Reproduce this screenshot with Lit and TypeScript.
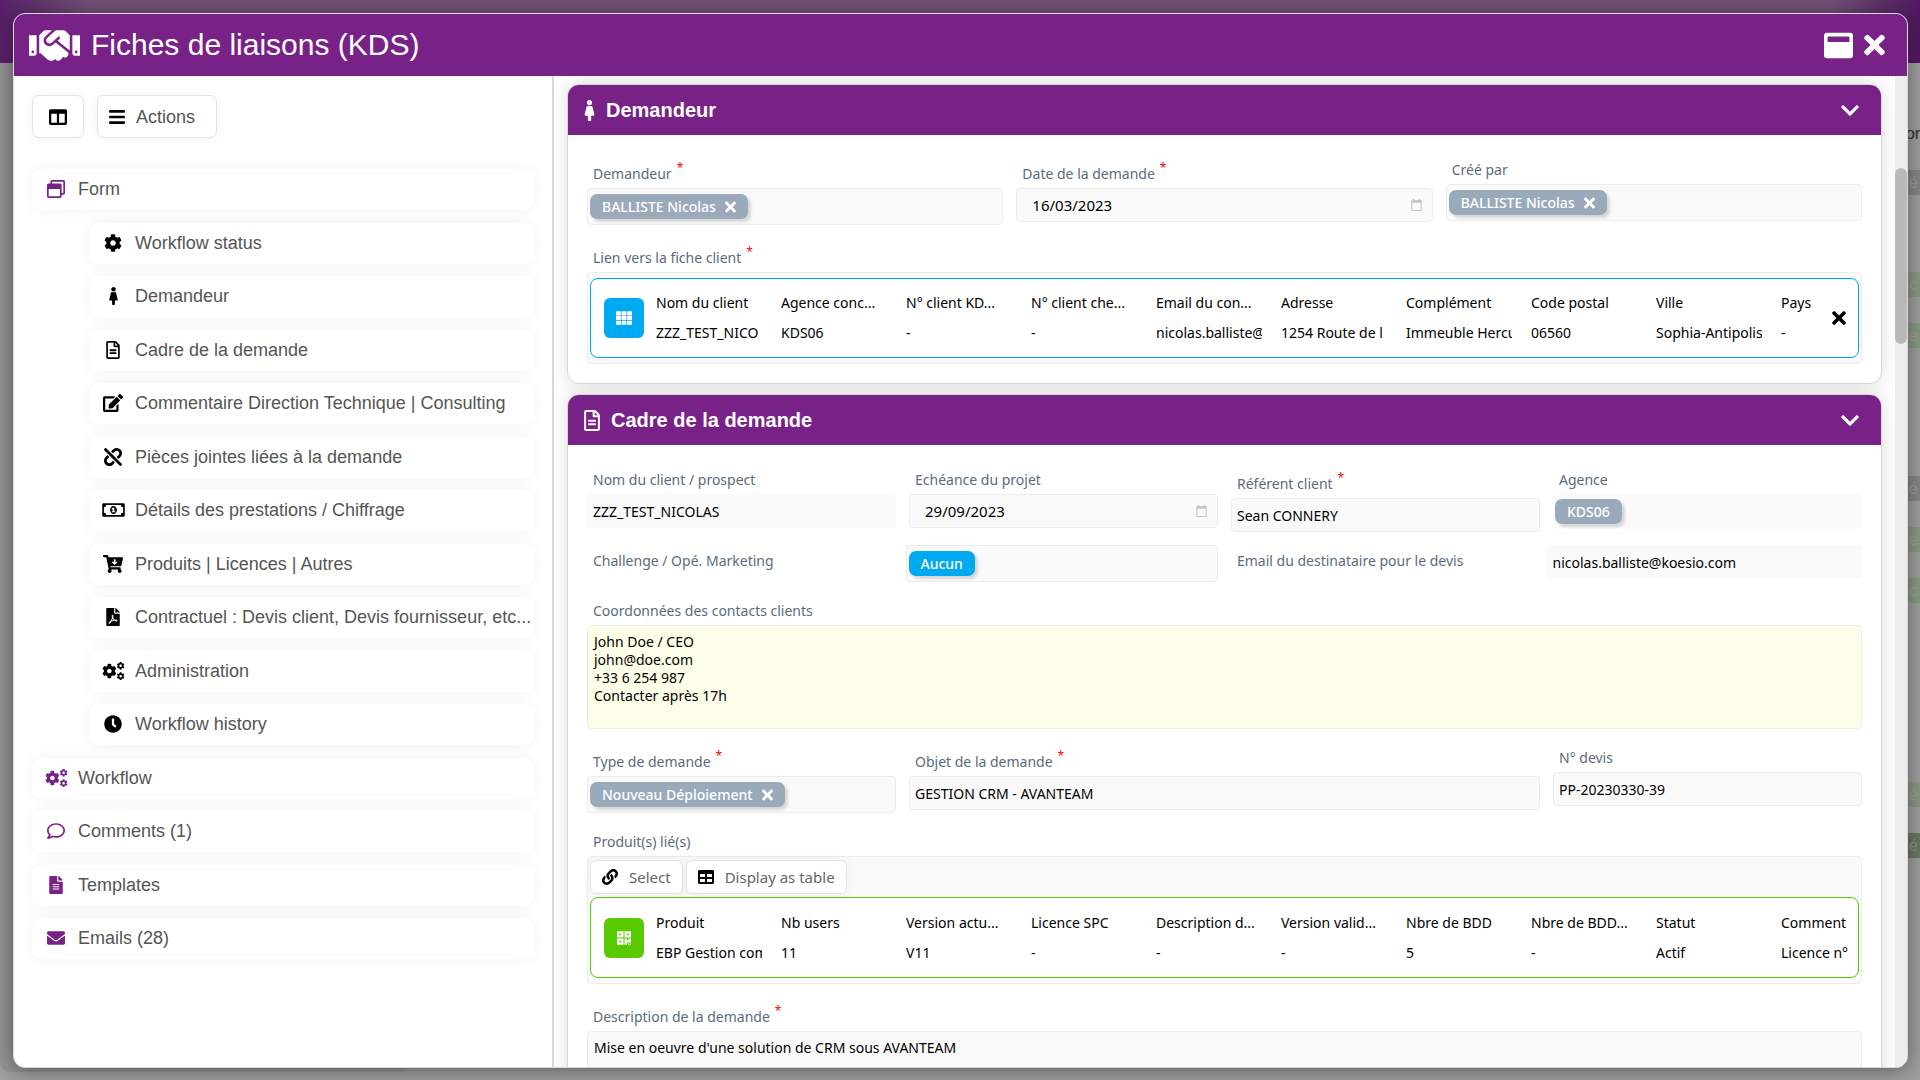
import { LitElement, html, css, svg, nothing, TemplateResult, SVGTemplateResult } from "lit";
import { customElement, property } from "lit/decorators.js";
import { classMap } from "lit/directives/class-map.js";

const COG =
  "M487.4 315.7l-42.6-24.6c4.3-23.2 4.3-47 0-70.2l42.6-24.6c4.9-2.8 7.1-8.6 5.5-14-11.1-35.6-30-67.8-54.7-94.6-3.8-4.1-10-5.1-14.8-2.3L380.8 110c-17.9-15.4-38.5-27.3-60.8-35.1V25.8c0-5.6-3.9-10.5-9.4-11.7-36.7-8.2-74.3-7.8-109.2 0-5.5 1.2-9.4 6.1-9.4 11.7V75c-22.2 7.9-42.8 19.8-60.8 35.1L88.7 85.5c-4.9-2.8-11-1.9-14.8 2.3-24.7 26.7-43.6 58.9-54.7 94.6-1.7 5.4.6 11.2 5.5 14L67.3 221c-4.3 23.2-4.3 47 0 70.2l-42.6 24.6c-4.9 2.8-7.1 8.6-5.5 14 11.1 35.6 30 67.8 54.7 94.6 3.8 4.1 10 5.1 14.8 2.3l42.6-24.6c17.9 15.4 38.5 27.3 60.8 35.1v49.2c0 5.6 3.9 10.5 9.4 11.7 36.7 8.2 74.3 7.8 109.2 0 5.5-1.2 9.4-6.1 9.4-11.7v-49.2c22.2-7.9 42.8-19.8 60.8-35.1l42.6 24.6c4.9 2.8 11 1.9 14.8-2.3 24.7-26.7 43.6-58.9 54.7-94.6 1.5-5.5-.7-11.3-5.6-14.1zM256 336c-44.1 0-80-35.9-80-80s35.9-80 80-80 80 35.9 80 80-35.9 80-80 80z";

const p = (d: string) => svg`<path d=${d}></path>`;

/* name -> [view box width, artwork]; every view box is 512 high */
const ICONS: Record<string, [number, SVGTemplateResult]> = {
  handshake: [640, p("M434.7 64h-85.9c-8 0-15.7 3-21.6 8.4l-98.3 90c-.1.1-.2.3-.3.4-16.6 15.6-16.3 40.5-2.1 56 12.7 13.9 39.4 17.6 56.1 2.7.1-.1.3-.1.4-.2l79.9-73.2c6.5-5.9 16.7-5.5 22.6 1 6 6.5 5.5 16.6-1 22.6l-26.1 23.9L504 313.8c2.9 2.4 5.5 5 7.9 7.7V128l-54.6-54.6c-5.9-6-14.1-9.4-22.6-9.4zM544 128.2v223.9c0 17.7 14.3 32 32 32h64V128.2h-96zm48 223.9c-8.8 0-16-7.2-16-16s7.2-16 16-16 16 7.2 16 16-7.2 16-16 16zM0 384h64c17.7 0 32-14.3 32-32V128.2H0V384zm48-63.9c8.8 0 16 7.2 16 16s-7.2 16-16 16-16-7.2-16-16c0-8.9 7.2-16 16-16zm435.9 18.6L334.6 217.5l-30 27.5c-29.7 27.1-75.2 24.5-101.7-4.4-26.9-29.4-24.8-74.9 4.4-101.7L289.1 64h-83.8c-8.5 0-16.6 3.4-22.6 9.4L128 128v223.9h18.3l90.5 81.9c27.4 22.3 67.7 18.1 90-9.3l.2-.2 17.9 15.5c15.9 13 39.4 10.5 52.3-5.4l31.4-38.6 5.4 4.4c13.7 11.1 33.9 9.1 45-4.7l9.5-11.7c11.2-13.8 9.1-33.9-4.6-45.1z")],
  cog: [512, p(COG)],
  cogs: [640, svg`<path d=${COG} transform="translate(-8 46) scale(.82)"></path><path d=${COG} transform="translate(410 -4) scale(.44)"></path><path d=${COG} transform="translate(410 290) scale(.44)"></path>`],
  female: [256, p("M128 0c35.346 0 64 28.654 64 64s-28.654 64-64 64c-35.346 0-64-28.654-64-64S92.654 0 128 0m119.283 354.179l-48-192A24 24 0 0 0 176 144h-11.36c-22.711 10.443-49.59 10.894-73.28 0H80a24 24 0 0 0-23.283 18.179l-48 192C4.935 369.305 16.383 384 32 384h56v104c0 13.255 10.745 24 24 24h32c13.255 0 24-10.745 24-24V384h56c15.591 0 27.071-14.671 23.283-29.821z")],
  file: [384, p("M288 248v28c0 6.6-5.4 12-12 12H108c-6.6 0-12-5.4-12-12v-28c0-6.6 5.4-12 12-12h168c6.6 0 12 5.4 12 12zm-12 72H108c-6.6 0-12 5.4-12 12v28c0 6.6 5.4 12 12 12h168c6.6 0 12-5.4 12-12v-28c0-6.6-5.4-12-12-12zm108-188.1V464c0 26.5-21.5 48-48 48H48c-26.5 0-48-21.5-48-48V48C0 21.5 21.5 0 48 0h204.1C264.8 0 277 5.1 286 14.1L369.9 98c9 8.9 14.1 21.2 14.1 33.9zm-128-80V128h76.1L256 51.9zM336 464V176H232c-13.3 0-24-10.7-24-24V48H48v416h288z")],
  fileSolid: [384, p("M224 136V0H24C10.7 0 0 10.7 0 24v464c0 13.3 10.7 24 24 24h336c13.3 0 24-10.7 24-24V160H248c-13.2 0-24-10.8-24-24zm64 236c0 6.6-5.4 12-12 12H108c-6.6 0-12-5.4-12-12v-8c0-6.6 5.4-12 12-12h168c6.6 0 12 5.4 12 12v8zm0-64c0 6.6-5.4 12-12 12H108c-6.6 0-12-5.4-12-12v-8c0-6.6 5.4-12 12-12h168c6.6 0 12 5.4 12 12v8zm0-72v8c0 6.6-5.4 12-12 12H108c-6.6 0-12-5.4-12-12v-8c0-6.6 5.4-12 12-12h168c6.6 0 12 5.4 12 12zm96-114.1v6.1H256V0h6.1c6.4 0 12.5 2.5 17 7l97.9 98c4.5 4.5 7 10.6 7 16.9z")],
  edit: [576, p("M402.6 83.2l90.2 90.2c3.8 3.8 3.8 10 0 13.8L274.4 405.6l-92.8 10.3c-12.4 1.4-22.9-9.1-21.5-21.5l10.3-92.8L388.8 83.2c3.8-3.8 10-3.8 13.8 0zm162-22.9l-48.8-48.8c-15.2-15.2-39.9-15.2-55.2 0l-35.4 35.4c-3.8 3.8-3.8 10 0 13.8l90.2 90.2c3.8 3.8 10 3.8 13.8 0l35.4-35.4c15.2-15.3 15.2-40 0-55.2zM384 346.2V448H64V128h229.8c3.2 0 6.2-1.3 8.5-3.5l40-40c7.6-7.6 2.2-20.5-8.5-20.5H48C21.5 64 0 85.5 0 112v352c0 26.5 21.5 48 48 48h352c26.5 0 48-21.5 48-48V306.2c0-10.7-12.9-16-20.5-8.5l-40 40c-2.2 2.3-3.5 5.3-3.5 8.5z")],
  unlink: [512, p("M304.083 405.907c4.686 4.686 4.686 12.284 0 16.971l-44.674 44.674c-59.263 59.262-155.693 59.266-214.961 0-59.264-59.265-59.264-155.696 0-214.96l44.675-44.675c4.686-4.686 12.284-4.686 16.971 0l39.598 39.598c4.686 4.686 4.686 12.284 0 16.971l-44.675 44.674c-28.072 28.073-28.072 73.75 0 101.823 28.072 28.072 73.75 28.073 101.824 0l44.674-44.674c4.686-4.686 12.284-4.686 16.971 0l39.597 39.598zm-56.568-260.216c4.686 4.686 12.284 4.686 16.971 0l44.674-44.674c28.072-28.075 73.75-28.073 101.824 0 28.072 28.073 28.072 73.75 0 101.823l-44.675 44.674c-4.686 4.686-4.686 12.284 0 16.971l39.598 39.598c4.686 4.686 12.284 4.686 16.971 0l44.675-44.675c59.265-59.265 59.265-155.695 0-214.96-59.266-59.264-155.695-59.264-214.961 0l-44.674 44.674c-4.686 4.686-4.686 12.284 0 16.971l39.597 39.598zm234.828 359.28l22.627-22.627c9.373-9.373 9.373-24.569 0-33.941L63.598 7.029c-9.373-9.373-24.569-9.373-33.941 0L7.029 29.657c-9.373 9.373-9.373 24.569 0 33.941l441.373 441.373c9.373 9.372 24.569 9.372 33.941 0z")],
  money: [640, svg`<path fill-rule="evenodd" d="M32 64H608a32 32 0 0 1 32 32V416a32 32 0 0 1-32 32H32a32 32 0 0 1-32-32V96A32 32 0 0 1 32 64ZM112 112A64 64 0 0 1 48 176V336A64 64 0 0 1 112 400H528A64 64 0 0 1 592 336V176A64 64 0 0 1 528 112Z"></path><path fill-rule="evenodd" d="M320 144c53 0 96 50 96 112s-43 112-96 112-96-50-96-112 43-112 96-112Zm-24 48-26 18v30l26-8v56h-22v32h92v-32h-22v-96Z"></path>`],
  cart: [576, p("M504.717 320H211.572l6.545 32h268.418c15.401 0 26.816 14.301 23.403 29.319l-5.517 24.276C523.112 414.668 536 433.828 536 456c0 31.202-25.519 56.444-56.824 55.994-29.823-.429-54.35-24.631-55.155-54.447-.44-16.287 6.085-31.049 16.803-41.548H231.176C241.553 426.165 248 440.326 248 456c0 31.813-26.528 57.431-58.67 55.938-28.54-1.325-51.751-24.385-53.251-52.917-1.158-22.034 10.436-41.455 28.051-51.586L93.883 64H24C10.745 64 0 53.255 0 40V24C0 10.745 10.745 0 24 0h102.529c11.401 0 21.228 8.021 23.513 19.19L159.208 64H551.99c15.401 0 26.816 14.301 23.403 29.319l-47.273 208C525.637 312.246 515.923 320 504.717 320zM403.029 192H360v-60c0-6.627-5.373-12-12-12h-24c-6.627 0-12 5.373-12 12v60h-43.029c-10.691 0-16.045 12.926-8.485 20.485l67.029 67.029c4.686 4.686 12.284 4.686 16.971 0l67.029-67.029c7.559-7.559 2.205-20.485-8.486-20.485z")],
  pdf: [384, p("M181.9 256.1c-5-16-4.9-46.9-2-46.9 8.4 0 7.6 36.9 2 46.9zm-1.7 47.2c-7.7 20.2-17.3 43.3-28.4 62.7 18.3-7 39-17.2 62.9-21.9-12.7-9.6-24.9-23.4-34.5-40.8zM86.1 428.1c0 .8 13.2-5.4 34.9-40.2-6.7 6.3-29.1 24.5-34.9 40.2zM248 160h136v328c0 13.3-10.7 24-24 24H24c-13.3 0-24-10.7-24-24V24C0 10.7 10.7 0 24 0h200v136c0 13.2 10.8 24 24 24zm-8 171.8c-20-12.2-33.3-29-42.7-53.8 4.5-18.5 11.6-46.6 6.2-64.2-4.7-29.4-42.4-26.5-47.8-6.8-5 18.3-.4 44.1 8.1 77-11.6 27.6-28.7 64.6-40.8 85.8-.1 0-.1.1-.2.1-27.1 13.9-73.6 44.5-54.5 68 5.6 6.9 16 10 21.5 10 17.9 0 35.7-18 61.1-61.8 25.8-8.5 54.1-19.1 79-23.2 21.7 11.8 47.1 19.5 64 19.5 29.2 0 31.2-32 19.7-43.4-13.9-13.6-54.3-9.7-73.6-7.2zM377 105L279 7c-4.5-4.5-10.6-7-17-7h-6v128h128v-6.1c0-6.3-2.5-12.4-7-16.9zm-74.1 255.3c4.1-2.7-2.5-11.9-42.8-9 37.1 15.8 42.8 9 42.8 9z")],
  clock: [512, p("M256,8C119,8,8,119,8,256S119,504,256,504,504,393,504,256,393,8,256,8Zm92.49,313h0l-20,25a16,16,0,0,1-22.49,2.5h0l-67-49.72a40,40,0,0,1-15-31.23V112a16,16,0,0,1,16-16h32a16,16,0,0,1,16,16V256l58,42.5A16,16,0,0,1,348.49,321Z")],
  comment: [512, p("M256 32C114.6 32 0 125.1 0 240c0 47.6 19.9 91.2 52.9 126.3C38 405.7 7 439.1 6.5 439.5c-6.6 7-8.4 17.2-4.6 26S14.4 480 24 480c61.5 0 110-25.7 139.1-46.3C192 442.8 223.2 448 256 448c141.4 0 256-93.1 256-208S397.4 32 256 32zm0 368c-26.7 0-53.1-4.1-78.4-12.1l-22.7-7.2-19.5 13.8c-14.3 10.1-33.9 21.4-57.5 29 7.3-12.1 14.4-25.7 19.9-40.2l10.6-28.1-20.6-21.8C69.7 314.1 48 282.2 48 240c0-88.2 93.3-160 208-160s208 71.8 208 160-93.3 160-208 160z")],
  envelope: [512, p("M502.3 190.8c3.9-3.1 9.7-.2 9.7 4.7V400c0 26.5-21.5 48-48 48H48c-26.5 0-48-21.5-48-48V195.6c0-5 5.7-7.8 9.7-4.7 22.4 17.4 52.1 39.5 154.1 113.6 21.1 15.4 56.7 47.8 92.2 47.6 35.7.3 72-32.8 92.3-47.6 102-74.1 131.6-96.3 154-113.7zM256 320c23.2.4 56.6-29.2 73.4-41.4 132.7-96.3 142.8-104.7 173.4-128.7 5.8-4.5 9.2-11.5 9.2-18.9v-19c0-26.5-21.5-48-48-48H48c-26.5 0-48 21.5-48 48v19c0 7.4 3.4 14.3 9.2 18.9 30.6 23.9 40.7 32.4 173.4 128.7 16.8 12.2 50.2 41.8 73.4 41.4z")],
  windows: [512, p("M464 0H144c-26.5 0-48 21.5-48 48v48H48c-26.5 0-48 21.5-48 48v320c0 26.5 21.5 48 48 48h320c26.5 0 48-21.5 48-48v-48h48c26.5 0 48-21.5 48-48V48c0-26.5-21.5-48-48-48zm-96 464H48V256h320v208zm96-96h-48V144c0-26.5-21.5-48-48-48H144V48h320v320z")],
  maximize: [512, p("M464 32H48C21.5 32 0 53.5 0 80v352c0 26.5 21.5 48 48 48h416c26.5 0 48-21.5 48-48V80c0-26.5-21.5-48-48-48zm-16 160H64v-84c0-6.6 5.4-12 12-12h360c6.6 0 12 5.4 12 12v84z")],
  times: [352, p("M242.72 256l100.07-100.07c12.28-12.28 12.28-32.19 0-44.48l-22.24-22.24c-12.28-12.28-32.19-12.28-44.48 0L176 189.28 75.93 89.21c-12.28-12.28-32.19-12.28-44.48 0L9.21 111.45c-12.28 12.28-12.28 32.19 0 44.48L109.28 256 9.21 356.07c-12.28 12.28-12.28 32.19 0 44.48l22.24 22.24c12.28 12.28 32.2 12.28 44.48 0L176 322.72l100.07 100.07c12.28 12.28 32.2 12.28 44.48 0l22.24-22.24c12.28-12.28 12.28-32.19 0-44.48L242.72 256z")],
  bars: [448, p("M16 132h416c8.837 0 16-7.163 16-16V76c0-8.837-7.163-16-16-16H16C7.163 60 0 67.163 0 76v40c0 8.837 7.163 16 16 16zm0 160h416c8.837 0 16-7.163 16-16v-40c0-8.837-7.163-16-16-16H16c-8.837 0-16 7.163-16 16v40c0 8.837 7.163 16 16 16zm0 160h416c8.837 0 16-7.163 16-16v-40c0-8.837-7.163-16-16-16H16c-8.837 0-16 7.163-16 16v40c0 8.837 7.163 16 16 16z")],
  columns: [512, p("M464 32H48C21.49 32 0 53.49 0 80v352c0 26.51 21.49 48 48 48h416c26.51 0 48-21.49 48-48V80c0-26.51-21.49-48-48-48zM224 416H64V160h160v256zm224 0H288V160h160v256z")],
  chevron: [448, p("M207.029 381.476L12.686 187.132c-9.373-9.373-9.373-24.569 0-33.941l22.667-22.667c9.357-9.357 24.522-9.375 33.901-.04L224 284.505l154.745-154.021c9.379-9.335 24.544-9.317 33.901.04l22.667 22.667c9.373 9.373 9.373 24.569 0 33.941L240.971 381.476c-9.373 9.372-24.569 9.372-33.942 0z")],
  link: [512, p("M326.612 185.391c59.747 59.809 58.927 155.698.36 214.59-.11.12-.24.25-.36.37l-67.2 67.2c-59.27 59.27-155.699 59.262-214.96 0-59.27-59.26-59.27-155.7 0-214.96l37.106-37.106c9.84-9.84 26.786-3.3 27.294 10.606.648 17.722 3.826 35.527 9.69 52.721 1.986 5.822.567 12.262-3.783 16.612l-13.087 13.087c-28.026 28.026-28.905 73.66-1.155 101.96 28.024 28.579 74.086 28.749 102.325.51l67.2-67.19c28.191-28.191 28.073-73.757 0-101.83-3.701-3.694-7.429-6.564-10.341-8.569a16.037 16.037 0 0 1-6.947-12.606c-.396-10.567 3.348-21.456 11.698-29.806l21.054-21.055c5.521-5.521 14.182-6.199 20.584-1.731a152.482 152.482 0 0 1 20.522 17.197zM467.547 44.449c-59.261-59.262-155.69-59.27-214.96 0l-67.2 67.2c-.12.12-.25.25-.36.37-58.566 58.892-59.387 154.781.36 214.59a152.454 152.454 0 0 0 20.521 17.196c6.402 4.468 15.064 3.789 20.584-1.731l21.054-21.055c8.35-8.35 12.094-19.239 11.698-29.806a16.037 16.037 0 0 0-6.947-12.606c-2.912-2.005-6.64-4.875-10.341-8.569-28.073-28.073-28.191-73.639 0-101.83l67.2-67.19c28.239-28.239 74.3-28.069 102.325.51 27.75 28.3 26.872 73.934-1.155 101.96l-13.087 13.087c-4.35 4.35-5.769 10.79-3.783 16.612 5.864 17.194 9.042 34.999 9.69 52.721.509 13.906 17.454 20.446 27.294 10.606l37.106-37.106c59.271-59.259 59.271-155.699.001-214.959z")],
  table: [512, p("M464 32H48C21.49 32 0 53.49 0 80v352c0 26.51 21.49 48 48 48h416c26.51 0 48-21.49 48-48V80c0-26.51-21.49-48-48-48zM224 416H64v-96h160v96zm0-160H64v-96h160v96zm224 160H288v-96h160v96zm0-160H288v-96h160v96z")],
  grid: [512, p("M0 40h156v132H0zM178 40h156v132H178zM356 40h156v132H356zM0 190h156v132H0zM178 190h156v132H178zM356 190h156v132H356zM0 340h156v132H0zM178 340h156v132H178zM356 340h156v132H356z")],
  qrcode: [512, svg`<path fill-rule="evenodd" d="M32 40H240V240H32ZM106 112V168H166V112ZM272 40H480V240H272ZM346 112V168H406V112ZM32 272H240V472H32ZM106 344V400H166V344ZM272 272H346V326H400V272H480V400H346V472H272ZM380 430H420V472H380ZM440 430H480V472H440Z"></path>`],
  calendar: [448, svg`<path fill-rule="evenodd" d="M64 0H128V40H320V0H384V40H408A40 40 0 0 1 448 80V472A40 40 0 0 1 408 512H40A40 40 0 0 1 0 472V80A40 40 0 0 1 40 40H64ZM48 160V464H400V160Z"></path>`],
};

@customElement("ui-icon")
export class UiIcon extends LitElement {
  @property() name = "";
  @property({ type: Number }) size = 18;

  static styles = css`
    :host { display: inline-flex; flex: none; }
    svg { display: block; fill: currentColor; }
  `;

  render() {
    const [width, art] = ICONS[this.name];
    return html`<svg
      aria-hidden="true"
      width=${Math.round((width * this.size) / 512)}
      height=${this.size}
      viewBox="0 0 ${width} 512"
    >${art}</svg>`;
  }
}

const icon = (name: string, size: number) => html`<ui-icon name=${name} .size=${size}></ui-icon>`;

const SECTIONS: [string, string][] = [
  ["cog", "Workflow status"],
  ["female", "Demandeur"],
  ["file", "Cadre de la demande"],
  ["edit", "Commentaire Direction Technique | Consulting"],
  ["unlink", "Pièces jointes liées à la demande"],
  ["money", "Détails des prestations / Chiffrage"],
  ["cart", "Produits | Licences | Autres"],
  ["pdf", "Contractuel : Devis client, Devis fournisseur, etc..."],
  ["cogs", "Administration"],
  ["clock", "Workflow history"],
];

const PANELS: [string, string][] = [
  ["cogs", "Workflow"],
  ["comment", "Comments (1)"],
  ["fileSolid", "Templates"],
  ["envelope", "Emails (28)"],
];

const CLIENT: [string, string][] = [
  ["Nom du client", "ZZZ_TEST_NICO"],
  ["Agence conc...", "KDS06"],
  ["N° client KD...", "-"],
  ["N° client che...", "-"],
  ["Email du con...", "nicolas.balliste@"],
  ["Adresse", "1254 Route de l"],
  ["Complément", "Immeuble Hercu"],
  ["Code postal", "06560"],
  ["Ville", "Sophia-Antipolis"],
  ["Pays", "-"],
];

const PRODUCT: [string, string][] = [
  ["Produit", "EBP Gestion com"],
  ["Nb users", "11"],
  ["Version actu...", "V11"],
  ["Licence SPC", "-"],
  ["Description d...", "-"],
  ["Version valid...", "-"],
  ["Nbre de BDD", "5"],
  ["Nbre de BDD...", "-"],
  ["Statut", "Actif"],
  ["Comment", "Licence n°"],
];

/* status tags of the list under the dialog, one every row */
const TAGS: [string, string][] = [
  ["grey", "lé"], ["", ""], ["green", "nc"], ["green", "de"], ["", ""], ["", ""], ["grey", "lé"],
  ["green", "de"], ["green", "nc"], ["", ""], ["", ""], ["", ""], ["green", "é"], ["dark", "é"],
];

@customElement("app-root")
export class AppRoot extends LitElement {
  static styles = css`
    :host {
      display: block;
      position: relative;
      height: 100vh;
      overflow: hidden;
      box-sizing: border-box;
      padding: 13px 12px 12px 13px;
      background: #a0a0a0;
      color: #000;
      font: 14px/20px "Noto Sans", "Open Sans", sans-serif;
      --brand: #782287;
      --ui: "Liberation Sans", Arial, sans-serif;
    }
    *, *::before, *::after { box-sizing: border-box; }
    button, input, textarea { font: inherit; color: inherit; margin: 0; }
    button { display: inline-flex; align-items: center; border: 0; padding: 0; background: none; cursor: pointer; }
    ul { list-style: none; margin: 0; padding: 0; }
    h1, h2 { margin: 0; }

    .backdrop { position: absolute; inset: 0; display: flex; flex-direction: column; }
    .topbar { flex: none; height: 63px; background: linear-gradient(90deg, #5a1f6b, #755479 90px, #755479 calc(100% - 90px), #521763); }
    .under { flex: 1; display: flex; justify-content: space-between; }
    .under-panel { width: 410px; margin-bottom: 8px; border-radius: 0 0 10px 10px; background: #959595; }
    .under-rows { width: 12px; padding-top: 58px; display: flex; flex-direction: column; gap: 24px; font: 17px/25px var(--ui); overflow: hidden; }
    .under-head { color: #333; height: 25px; display: flex; justify-content: flex-end; margin-right: -9px; }
    .tags { display: flex; flex-direction: column; gap: 26px; }
    .tag { height: 25px; display: flex; justify-content: flex-end; padding-right: 2px; color: #a0a0a0; }
    .tag.grey { background: #888; }
    .tag.green { background: #8c9b86; }
    .tag.dark { background: #6d7866; color: #8d9686; }

    .modal {
      position: relative;
      height: 100%;
      display: flex;
      flex-direction: column;
      overflow: hidden;
      border: 1px solid #d8d8d8;
      border-radius: 12px;
      background: #fff;
      box-shadow: 0 2px 22px rgba(0, 0, 0, 0.45);
    }
    .titlebar { flex: none; height: 62px; display: flex; align-items: center; gap: 11px; padding: 0 22px 0 15px; background: var(--brand); color: #fff; }
    .titlebar h1 { flex: 1; font: 400 30px/36px var(--ui); }
    .window-buttons { display: flex; gap: 11px; }
    .content { flex: 1; min-height: 0; display: flex; }

    .sidebar { flex: 0 0 540px; min-width: 0; padding: 19px 18px; border-right: 2px solid #d8d8d8; color: #555; font: 18px/24px var(--ui); }
    .toolbar { display: flex; gap: 13px; margin-bottom: 31px; }
    .tool { height: 43px; padding: 0 21px 0 11px; gap: 11px; border: 1px solid #e4e4e4; border-radius: 7px; background: #fff; box-shadow: 0 0 12px rgba(0, 0, 0, 0.05); }
    .tool.square { width: 52px; padding: 0; justify-content: center; }
    .tool ui-icon { color: #000; }
    .nav { display: flex; flex-direction: column; gap: 13px; }
    .sub { margin: 13px 0 0 57px; }
    .sub, .more { display: flex; flex-direction: column; gap: 12px; }
    .sub > li:nth-child(even):not(:last-child), .more > li:nth-child(even) { padding-bottom: 1px; }
    .entry { width: 100%; height: 41px; display: flex; align-items: center; gap: 10px; padding: 0 2px 2px 12px; border-radius: 10px; background: #fff; box-shadow: 0 0 16px rgba(0, 0, 0, 0.05); color: #555; text-decoration: none; white-space: nowrap; }
    .entry-icon { flex: none; width: 24px; display: flex; justify-content: center; color: #000; }
    .entry-icon.brand { color: var(--brand); }

    .main { flex: 1; min-width: 0; padding: 8px 13px 0; display: flex; flex-direction: column; gap: 10px; overflow: hidden; }
    .scroll { flex: none; width: 12px; padding-top: 92px; background: #ededed; }
    .thumb { height: 176px; border-radius: 6px; background: #b9b9b9; }

    .card { flex: none; border: 1px solid #d8d8d8; border-radius: 12px; background: #fff; box-shadow: 0 0 18px rgba(0, 0, 0, 0.14); }
    .card-head { height: 50px; display: flex; align-items: center; gap: 11px; padding: 0 22px 0 16px; border-radius: 11px 11px 0 0; background: var(--brand); color: #fff; }
    .card-head h2 { flex: 1; font: 700 20px/24px var(--ui); }
    .card-body { padding: 25px 19px 19px; display: flex; flex-direction: column; gap: 19px; }
    .group { display: flex; flex-direction: column; gap: 13px; }
    .row { display: grid; gap: 13px; align-items: start; }
    .three { grid-template-columns: repeat(3, 1fr); }
    .four { grid-template-columns: repeat(4, 1fr); }
    .two { grid-template-columns: repeat(2, 1fr); }
    .span2 { grid-column: span 2; }

    .cell { min-width: 0; }
    .label { display: flex; gap: 5px; align-items: flex-end; padding: 0 6px 4px; color: #5b6b7d; line-height: 20px; }
    .label.required { padding-top: 4px; }
    .label .star { align-self: flex-start; margin-top: -4px; color: #f00; font-size: 12px; line-height: 16px; }
    .inline { display: flex; align-items: flex-start; }
    .inline > .label { flex: 1; padding: 0 6px; line-height: 32px; }
    .inline > .box, .inline > .text { flex: 1; min-width: 0; }

    .text, .area, .box { width: 100%; display: block; border: 1px solid #ececec; border-radius: 4px; background: #fafafa; }
    .text { height: 34px; padding: 0 5px; }
    .text.plain { border-color: #fafafa; }
    .area { resize: none; padding: 7px 6px 5px; line-height: 18px; overflow: hidden; }
    .area.cream { background: #feffe8; }
    .date { display: flex; align-items: center; padding: 0 11px 0 15px; height: 34px; }
    .date input { flex: 1; min-width: 0; border: 0; padding: 0; background: none; font-size: 15px; }
    .date button { width: 10px; color: #c6c6c6; }
    .box.chips { display: flex; padding: 5px 2px; }
    .box.chips.plain { border: 0; }
    .box.stack { padding: 5px 2px; }
    .box.tools { padding-top: 3px; }

    .chip { height: 25px; display: inline-flex; align-items: center; gap: 9px; padding: 0 12px; border-radius: 7px; background: #9aaabb; color: #fff; font-weight: 500; box-shadow: 3px 3px 3px rgba(0, 0, 0, 0.14); white-space: nowrap; }
    .chip.blue { background: #00aaf0; }

    .record-tools { display: flex; gap: 3px; margin-bottom: 3px; }
    .record-tools button { height: 34px; gap: 11px; padding: 0 11px; border: 1px solid #e4e4e4; border-radius: 6px; background: #fff; color: #666; font-size: 15px; box-shadow: 0 0 12px rgba(0, 0, 0, 0.05); }
    .record-tools ui-icon { color: #000; }
    .record { display: flex; align-items: center; gap: 12px; min-height: 80px; padding: 9px 12px 9px 13px; border: 1px solid #00a4ea; border-radius: 8px; background: #fff; }
    .record.green { min-height: 81px; padding-right: 10px; border-color: #57cb00; }
    .tile { flex: none; width: 40px; height: 40px; display: flex; align-items: center; justify-content: center; border-radius: 6px; background: #00aaf0; color: #fff; }
    .green .tile { background: #57cb00; }
    .record-data { flex: 1; min-width: 0; overflow: hidden; }
    .record table { width: 1250px; table-layout: fixed; border-collapse: collapse; }
    .record th, .record td { padding: 0 19px 0 0; text-align: left; font-weight: 400; line-height: 30px; }
    .record th span, .record td span { display: block; overflow: hidden; white-space: nowrap; }
  `;

  private label(text: string, required = false, forId?: string): TemplateResult {
    const cls = classMap({ label: true, required });
    const star = required ? html`<span class="star">*</span>` : nothing;
    return forId
      ? html`<label class=${cls} for=${forId}>${text}${star}</label>`
      : html`<div class=${cls}>${text}${star}</div>`;
  }

  private chip(text: string, removable = false, blue = false): TemplateResult {
    return html`<span class=${classMap({ chip: true, blue })}>${text}${removable
      ? html`<button aria-label="Retirer">${icon("times", 16)}</button>`
      : nothing}</span>`;
  }

  private date(id: string, value: string): TemplateResult {
    return html`<div class="box date">
      <input id=${id} type="text" .value=${value} />
      <button aria-label="Calendrier">${icon("calendar", 12)}</button>
    </div>`;
  }

  private entry(name: string, text: string, brand: boolean): TemplateResult {
    return html`<a class="entry" href="#">
      <span class=${classMap({ "entry-icon": true, brand })}>${icon(name, 18)}</span>${text}
    </a>`;
  }

  private record(fields: [string, string][]): TemplateResult {
    return html`<div class="record-data"><table>
      <thead><tr>${fields.map(([h]) => html`<th scope="col"><span>${h}</span></th>`)}</tr></thead>
      <tbody><tr>${fields.map(([, v]) => html`<td><span>${v}</span></td>`)}</tr></tbody>
    </table></div>`;
  }

  private cardHead(name: string, text: string): TemplateResult {
    return html`<header class="card-head">
      ${icon(name, 21)}
      <h2>${text}</h2>
      <button aria-label="Replier">${icon("chevron", 21)}</button>
    </header>`;
  }

  render() {
    return html`
      <div class="backdrop" aria-hidden="true">
        <div class="topbar"></div>
        <div class="under">
          <div class="under-panel"></div>
          <div class="under-rows">
            <div class="under-head">ork</div>
            <div class="tags">${TAGS.map(([tone, t]) => html`<span class="tag ${tone}">${t}</span>`)}</div>
          </div>
        </div>
      </div>

      <section class="modal" role="dialog" aria-label="Fiches de liaisons (KDS)">
        <header class="titlebar">
          ${icon("handshake", 41)}
          <h1>Fiches de liaisons (KDS)</h1>
          <div class="window-buttons">
            <button aria-label="Agrandir">${icon("maximize", 29)}</button>
            <button aria-label="Fermer">${icon("times", 30)}</button>
          </div>
        </header>

        <div class="content">
          <aside class="sidebar">
            <div class="toolbar">
              <button class="tool square" aria-label="Colonnes">${icon("columns", 18)}</button>
              <button class="tool">${icon("bars", 18)}Actions</button>
            </div>
            <nav class="nav">
              <div>
                ${this.entry("windows", "Form", true)}
                <ul class="sub">${SECTIONS.map(([n, t]) => html`<li>${this.entry(n, t, false)}</li>`)}</ul>
              </div>
              <ul class="more">${PANELS.map(([n, t]) => html`<li>${this.entry(n, t, true)}</li>`)}</ul>
            </nav>
          </aside>

          <main class="main">
            <section class="card">
              ${this.cardHead("female", "Demandeur")}
              <div class="card-body">
                <div class="row three">
                  <div class="cell">
                    ${this.label("Demandeur", true)}
                    <div class="box chips">${this.chip("BALLISTE Nicolas", true)}</div>
                  </div>
                  <div class="cell">
                    ${this.label("Date de la demande", true, "date-demande")}
                    ${this.date("date-demande", "16/03/2023")}
                  </div>
                  <div class="cell">
                    ${this.label("Créé par")}
                    <div class="box chips">${this.chip("BALLISTE Nicolas", true)}</div>
                  </div>
                </div>
                <div class="cell">
                  ${this.label("Lien vers la fiche client", true)}
                  <div class="box stack">
                    <div class="record">
                      <span class="tile">${icon("grid", 16)}</span>
                      ${this.record(CLIENT)}
                      <button aria-label="Retirer">${icon("times", 20)}</button>
                    </div>
                  </div>
                </div>
              </div>
            </section>

            <section class="card">
              ${this.cardHead("file", "Cadre de la demande")}
              <div class="card-body">
                <div class="group">
                  <div class="row four">
                    <div class="cell">
                      ${this.label("Nom du client / prospect", false, "nom")}
                      <input id="nom" class="text plain" type="text" .value=${"ZZZ_TEST_NICOLAS"} />
                    </div>
                    <div class="cell">
                      ${this.label("Echéance du projet", false, "echeance")}
                      ${this.date("echeance", "29/09/2023")}
                    </div>
                    <div class="cell">
                      ${this.label("Référent client", true, "referent")}
                      <input id="referent" class="text" type="text" .value=${"Sean CONNERY"} />
                    </div>
                    <div class="cell">
                      ${this.label("Agence")}
                      <div class="box chips plain">${this.chip("KDS06")}</div>
                    </div>
                  </div>
                  <div class="row two">
                    <div class="inline">
                      ${this.label("Challenge / Opé. Marketing")}
                      <div class="box chips">${this.chip("Aucun", false, true)}</div>
                    </div>
                    <div class="inline">
                      ${this.label("Email du destinataire pour le devis", false, "email")}
                      <input id="email" class="text plain" type="text" .value=${"nicolas.balliste@koesio.com"} />
                    </div>
                  </div>
                </div>
                <div class="cell">
                  ${this.label("Coordonnées des contacts clients", false, "contacts")}
                  <textarea id="contacts" class="area cream" rows="5" .value=${"John Doe / CEO\njohn@doe.com\n+33 6 254 987\nContacter après 17h"}></textarea>
                </div>
                <div class="row four">
                  <div class="cell">
                    ${this.label("Type de demande", true)}
                    <div class="box chips">${this.chip("Nouveau Déploiement", true)}</div>
                  </div>
                  <div class="cell span2">
                    ${this.label("Objet de la demande", true, "objet")}
                    <input id="objet" class="text" type="text" .value=${"GESTION CRM - AVANTEAM"} />
                  </div>
                  <div class="cell">
                    ${this.label("N° devis", false, "devis")}
                    <input id="devis" class="text" type="text" .value=${"PP-20230330-39"} />
                  </div>
                </div>
                <div class="cell">
                  ${this.label("Produit(s) lié(s)")}
                  <div class="box stack tools">
                    <div class="record-tools">
                      <button>${icon("link", 16)}Select</button>
                      <button>${icon("table", 16)}Display as table</button>
                    </div>
                    <div class="record green">
                      <span class="tile">${icon("qrcode", 16)}</span>
                      ${this.record(PRODUCT)}
                    </div>
                  </div>
                </div>
                <div class="cell">
                  ${this.label("Description de la demande", true, "description")}
                  <textarea id="description" class="area" rows="5" .value=${"Mise en oeuvre d'une solution de CRM sous AVANTEAM"}></textarea>
                </div>
              </div>
            </section>
          </main>
          <div class="scroll" aria-hidden="true"><div class="thumb"></div></div>
        </div>
      </section>
    `;
  }
}
